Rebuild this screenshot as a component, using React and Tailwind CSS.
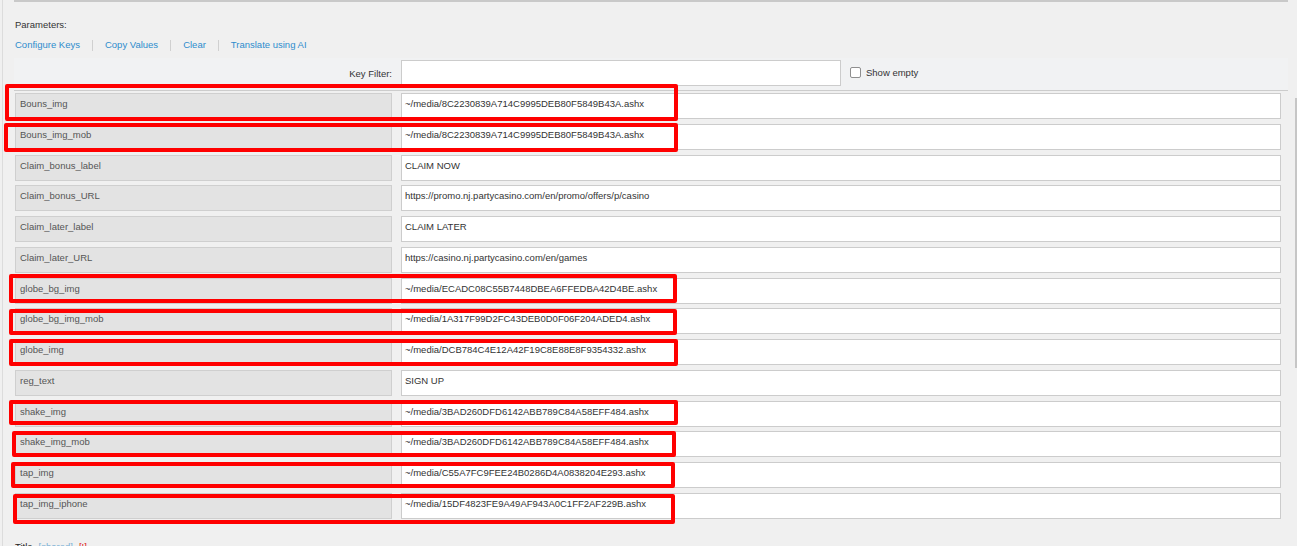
import React from "react";

const rows = [
  ["Bouns_img", "~/media/8C2230839A714C9995DEB80F5849B43A.ashx"],
  ["Bouns_img_mob", "~/media/8C2230839A714C9995DEB80F5849B43A.ashx"],
  ["Claim_bonus_label", "CLAIM NOW"],
  ["Claim_bonus_URL", "https://promo.nj.partycasino.com/en/promo/offers/p/casino"],
  ["Claim_later_label", "CLAIM LATER"],
  ["Claim_later_URL", "https://casino.nj.partycasino.com/en/games"],
  ["globe_bg_img", "~/media/ECADC08C55B7448DBEA6FFEDBA42D4BE.ashx"],
  ["globe_bg_img_mob", "~/media/1A317F99D2FC43DEB0D0F06F204ADED4.ashx"],
  ["globe_img", "~/media/DCB784C4E12A42F19C8E88E8F9354332.ashx"],
  ["reg_text", "SIGN UP"],
  ["shake_img", "~/media/3BAD260DFD6142ABB789C84A58EFF484.ashx"],
  ["shake_img_mob", "~/media/3BAD260DFD6142ABB789C84A58EFF484.ashx"],
  ["tap_img", "~/media/C55A7FC9FEE24B0286D4A0838204E293.ashx"],
  ["tap_img_iphone", "~/media/15DF4823FE9A49AF943A0C1FF2AF229B.ashx"],
];

const marks = [
  { l: 5, t: 84, r: 678, b: 121 },
  { l: 4, t: 123, r: 678, b: 152 },
  { l: 9, t: 274, r: 677, b: 303 },
  { l: 9, t: 309, r: 677, b: 335 },
  { l: 9, t: 339, r: 678, b: 366 },
  { l: 9, t: 400, r: 678, b: 425 },
  { l: 12, t: 431, r: 676, b: 457 },
  { l: 11, t: 462, r: 675, b: 488 },
  { l: 13, t: 494, r: 675, b: 524 },
];

function Sep() {
  return <span className="inline-block w-px h-[11px] bg-[#d0d0d0] mx-[12px]" />;
}

export default function App() {
  return (
    <div
      className="relative w-[1297px] h-[546px] overflow-hidden bg-[#f0f0f0] text-[#333] text-[9.5px] leading-[12px]"
      style={{ fontFamily: '"Liberation Sans", Arial, sans-serif' }}
    >
      <div className="ml-[2px] h-full border-l border-[#dcdcdc]">
        <div className="ml-[11px] w-[1274px] h-[2px] bg-[#c9c9c9]" />
        <div className="ml-[12px] mt-[17px]">Parameters:</div>
        <div className="ml-[12px] mt-[8px] flex items-center text-[#2e8ccd]">
          <span>Configure Keys</span>
          <Sep />
          <span>Copy Values</span>
          <Sep />
          <span>Clear</span>
          <Sep />
          <span>Translate using AI</span>
        </div>
        <div className="ml-[11px] mt-[7px] w-[1274px] h-[33px] bg-[#f1f2f3] border-b border-[#cccccc] pt-[2px] flex items-start">
          <div className="w-[378px] h-[26px] pt-[2px] flex items-center justify-end">Key Filter:</div>
          <div className="ml-[9px] w-[440px] h-[26px] bg-white border border-[#cccccc]" />
          <div className="ml-[9px] h-[26px] flex items-center gap-[5px] -mt-[1px]">
            <span className="w-[11px] h-[11px] bg-white border border-[#8f8f8f] rounded-[2px]" />
            <span className="pt-[1px]">Show empty</span>
          </div>
        </div>
        <div className="ml-[12px] mt-[2px] flex flex-col gap-[4.77px]">
          {rows.map(([k, v]) => (
            <div key={k} className="flex h-[26px]">
              <div className="w-[377px] h-[26px] bg-[#e3e3e3] border border-[#cfcfcf] pl-[4px] pt-[4px] text-[#555]">
                {k}
              </div>
              <div className="ml-[9px] w-[880px] h-[26px] bg-white border border-[#cccccc] pl-[3px] pt-[4px] text-[#333]">
                {v}
              </div>
            </div>
          ))}
        </div>
        <div className="ml-[12px] mt-[22px] flex items-center gap-[6px]">
          <span className="text-[#222]">Title</span>
          <span className="text-[#7ab0d6]">[shared]</span>
          <span className="text-[#e02020]">[!]</span>
        </div>
      </div>

      <div className="absolute left-[1295px] top-[98px] w-[2px] h-[270px] bg-[#c6c6c6]" />

      {marks.map((m, i) => (
        <div
          key={i}
          className="absolute border-[4px] border-[#ff0000] rounded-[2px]"
          style={{ left: m.l, top: m.t, width: m.r - m.l, height: m.b - m.t }}
        />
      ))}
    </div>
  );
}
